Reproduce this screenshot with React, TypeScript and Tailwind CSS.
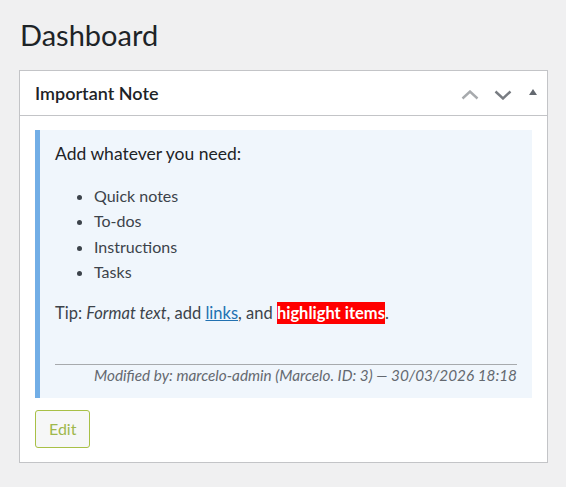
import React from "react";

const font = { fontFamily: "Lato, 'Liberation Sans', sans-serif" };

function ChevronUp() {
  return (
    <svg width="18" height="10" viewBox="0 0 18 10" className="mt-[3px]">
      <polyline points="1.5,8.5 9,1.5 16.5,8.5" fill="none" stroke="#a7aaad" strokeWidth="2.4" />
    </svg>
  );
}

function ChevronDown() {
  return (
    <svg width="18" height="10" viewBox="0 0 18 10" className="mt-[3px]">
      <polyline points="1.5,1.5 9,8.5 16.5,1.5" fill="none" stroke="#787c82" strokeWidth="2.4" />
    </svg>
  );
}

function Triangle() {
  return (
    <svg width="8" height="6" viewBox="0 0 8 6" className="-mt-[2px]">
      <polygon points="4,0 8,6 0,6" fill="#646970" />
    </svg>
  );
}

export default function App() {
  return (
    <div
      className="min-h-screen bg-[#f0f0f1] pl-[19px] pr-[18px] pt-[17px] pb-[24px] text-[#1d2327]"
      style={font}
    >
      <h1 className="text-[29px] leading-[35px] font-normal m-0 pl-[1px]">Dashboard</h1>

      <div className="mt-[18px] bg-white border border-[#c3c4c7]">
        <div className="flex items-center justify-between h-[45px] border-b border-[#c3c4c7] pl-[15px]">
          <h2 className="text-[18px] font-semibold leading-[22px]">Important Note</h2>
          <div className="flex items-center h-full">
            <button className="w-[33px] h-full flex items-center justify-center">
              <ChevronUp />
            </button>
            <button className="w-[33px] h-full flex items-center justify-center">
              <ChevronDown />
            </button>
            <button className="w-[28px] h-full flex items-center justify-center">
              <Triangle />
            </button>
          </div>
        </div>

        <div className="px-[15px] pt-[14px] pb-[14px]">
          <div className="bg-[#f0f6fc] border-l-[5px] border-[#72aee6] pl-[15px] pr-[15px] pt-[11px] pb-[13px] text-[16px] leading-[25.6px] text-[#3c434a]">
            <p className="text-[17.5px] text-[#1d2327]">Add whatever you need:</p>
            <ul className="list-disc pl-[39px] mt-[16px]">
              <li>Quick notes</li>
              <li>To-dos</li>
              <li>Instructions</li>
              <li>Tasks</li>
            </ul>
            <p className="mt-[16px] text-[16.5px]">
              Tip: <em>Format text</em>, add{" "}
              <a href="#" className="text-[#2271b1] underline">
                links
              </a>
              , and{" "}
              <span className="bg-[#ff0000] text-white font-bold py-[1px]">highlight items</span>.
            </p>
            <div className="mt-[37px] border-t border-[#a7aaad]" />
            <p className="text-right italic text-[15.3px] leading-[20px] text-[#646970]">
              Modified by: marcelo-admin (Marcelo. ID: 3) — 30/03/2026 18:18
            </p>
          </div>

          <button className="mt-[12px] h-[38px] px-[13px] rounded-[3px] border border-[#a8c046] bg-[#f6f7f7] text-[#9fb84c] text-[16px] leading-[20px]">
            Edit
          </button>
        </div>
      </div>
    </div>
  );
}
